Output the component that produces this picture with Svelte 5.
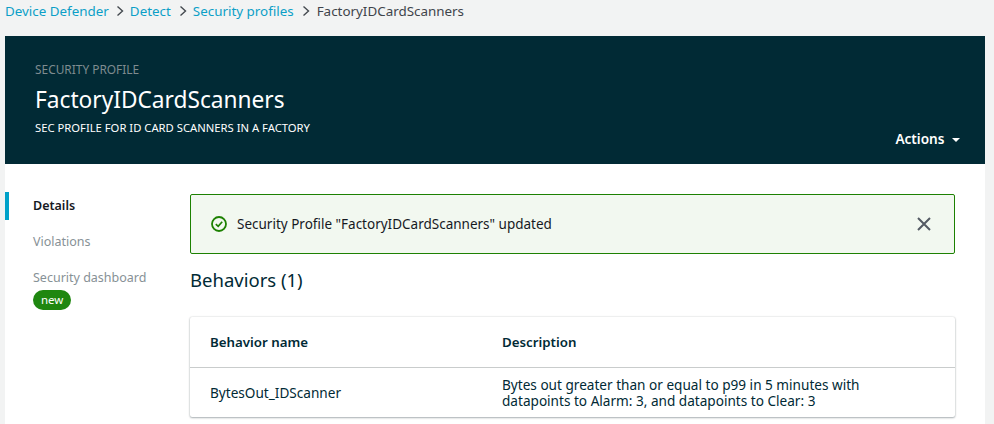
<script>
    const crumbs = ["Device Defender", "Detect", "Security profiles"];
</script>

<div class="page">
    <nav class="crumbs">
        {#each crumbs as crumb}
            <span class="link">{crumb}</span>
            <svg class="sep" width="8" height="12" viewBox="0 0 8 12"><path d="M1.5 1.5 L6.5 6 L1.5 10.5" fill="none" stroke="#44494f" stroke-width="1.4"/></svg>
        {/each}
        <span class="current">FactoryIDCardScanners</span>
    </nav>

    <main class="panel">
        <header class="hero">
            <div class="eyebrow">SECURITY PROFILE</div>
            <h1>FactoryIDCardScanners</h1>
            <div class="sub">SEC PROFILE FOR ID CARD SCANNERS IN A FACTORY</div>
            <div class="actions">Actions <span class="caret"></span></div>
        </header>

        <div class="body">
            <aside class="side">
                <div class="item active">Details</div>
                <div class="item">Violations</div>
                <div class="item">Security dashboard</div>
                <span class="pill">new</span>
            </aside>

            <section class="content">
                <div class="alert">
                    <svg class="check" width="16" height="16" viewBox="0 0 16 16"><circle cx="8" cy="8" r="7" fill="none" stroke="#1d8102" stroke-width="1.8"/><path d="M4.8 8.2 L7.2 10.4 L11.2 5.8" fill="none" stroke="#1d8102" stroke-width="1.7"/></svg>
                    <span class="msg">Security Profile "FactoryIDCardScanners" updated</span>
                    <svg class="close" width="14" height="14" viewBox="0 0 14 14"><path d="M1 1 L13 13 M13 1 L1 13" stroke="#545b64" stroke-width="2"/></svg>
                </div>

                <h2>Behaviors (1)</h2>

                <div class="table">
                    <div class="row head">
                        <div class="c1">Behavior name</div>
                        <div class="c2">Description</div>
                    </div>
                    <div class="row data">
                        <div class="c1">BytesOut_IDScanner</div>
                        <div class="c2">Bytes out greater than or equal to p99 in 5 minutes with<br>datapoints to Alarm: 3, and datapoints to Clear: 3</div>
                    </div>
                </div>
            </section>
        </div>
    </main>
</div>

<style>
    :global(body) {
        margin: 0;
        background: #f2f3f3;
    }

    .page {
        height: 424px;
        overflow: hidden;
        padding: 0 9px 0 5px;
        font-family: "Noto Sans", "Open Sans", sans-serif;
        font-size: 13.4px;
        color: #16191f;
    }

    .crumbs {
        height: 36px;
        display: flex;
        align-items: flex-start;
        padding-top: 2px;
        box-sizing: border-box;
        line-height: 18px;
    }

    .link {
        color: #0c9fc7;
    }

    .current {
        color: #3f444b;
    }

    .sep {
        margin: 3px 6px 0 7px;
    }

    .sep:nth-of-type(2) {
        margin-left: 8px;
    }

    .sep:nth-of-type(3) {
        margin-left: 8px;
        margin-right: 7px;
    }

    .panel {
        background: #fff;
        height: 388px;
    }

    .hero {
        position: relative;
        height: 128px;
        box-sizing: border-box;
        background: #012a35;
        padding: 26px 30px 0;
        color: #fff;
    }

    .eyebrow {
        font-size: 11.9px;
        line-height: 14px;
        color: #7f8c90;
    }

    h1 {
        margin: 9px 0 0;
        font-size: 22.7px;
        line-height: 30px;
        font-weight: 400;
    }

    .sub {
        margin-top: 6px;
        font-size: 11.25px;
        line-height: 14px;
    }

    .actions {
        position: absolute;
        right: 25px;
        top: 94px;
        font-weight: 600;
        font-size: 13.6px;
        line-height: 18px;
    }

    .caret {
        display: inline-block;
        margin-left: 4px;
        vertical-align: 2px;
        border-left: 4px solid transparent;
        border-right: 4px solid transparent;
        border-top: 4px solid #fff;
    }

    .body {
        display: flex;
    }

    .side {
        width: 185px;
        flex: none;
        padding-top: 28px;
        box-sizing: border-box;
    }

    .item {
        height: 36px;
        line-height: 27px;
        padding-left: 28px;
        font-size: 12.5px;
        color: #879196;
        box-sizing: border-box;
    }

    .item:nth-child(3) {
        height: 26px;
    }

    .item.active {
        border-left: 4px solid #00a1c9;
        padding-left: 24px;
        height: 28px;
        margin-bottom: 8px;
        color: #16191f;
        font-weight: 600;
    }

    .pill {
        display: inline-block;
        margin-left: 28px;
        padding: 0 8px;
        height: 20px;
        line-height: 19px;
        border-radius: 10px;
        background: #1f8710;
        color: #fff;
        font-size: 11.5px;
    }

    .content {
        width: 765px;
        padding-top: 30px;
    }

    .alert {
        display: flex;
        align-items: center;
        height: 60px;
        box-sizing: border-box;
        padding: 0 23px 0 20px;
        border: 1px solid #1d8102;
        border-radius: 2px;
        background: #f2f8f0;
    }

    .msg {
        flex: 1;
        margin-left: 10px;
        font-size: 13.5px;
    }

    h2 {
        margin: 13px 0 0;
        font-size: 18.5px;
        line-height: 26px;
        font-weight: 400;
        color: #012a35;
    }

    .table {
        margin-top: 24px;
        height: 100px;
        box-sizing: border-box;
        border-radius: 2px;
        box-shadow: 0 1px 2px 0 rgba(0, 28, 36, 0.3), 0 0 2px 0 rgba(0, 28, 36, 0.2);
        color: #012a35;
    }

    .row {
        display: flex;
        align-items: center;
        padding-left: 20px;
        box-sizing: border-box;
    }

    .head {
        height: 51px;
        border-bottom: 1px solid #c9cccc;
        font-weight: 600;
        font-size: 13.3px;
    }

    .data {
        height: 49px;
        font-size: 13.6px;
        line-height: 16px;
        padding-top: 1px;
    }

    .c1 {
        width: 292px;
        flex: none;
    }
</style>
